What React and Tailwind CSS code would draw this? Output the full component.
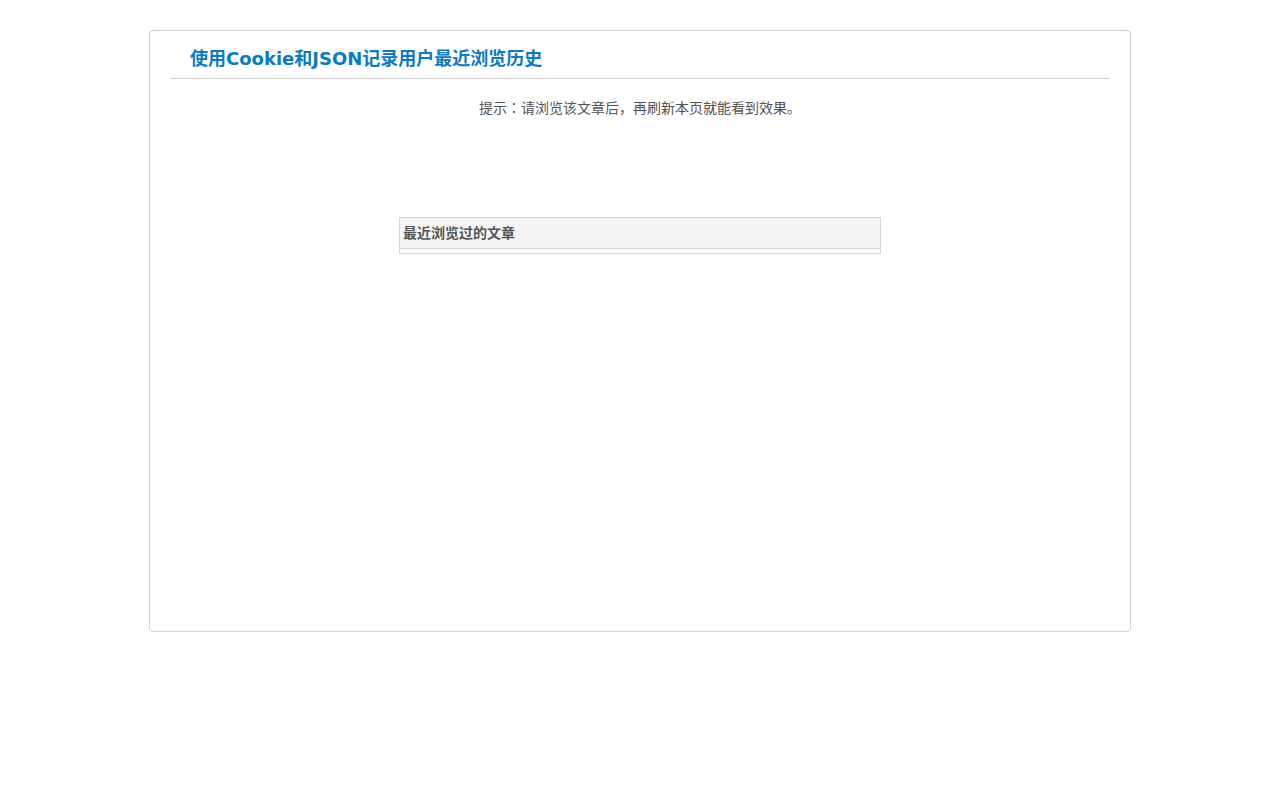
export default function App() {
  const font = { fontFamily: '"DejaVu Sans", "Noto Sans CJK JP", sans-serif' };
  return (
    <div className="bg-white min-h-[800px] pt-[30px]" style={font}>
      <div className="mx-auto w-[982px] h-[602px] border border-[#d0d0d0] rounded-[4px] px-[20px]">
        <h1 className="m-0 pl-[20px] pt-[14px] pb-[6px] text-[18px] leading-[27px] font-bold text-[#0a7bc1] border-b border-[#d0d0d0]">
          使用Cookie和JSON记录用户最近浏览历史
        </h1>
        <p className="mt-[19px] text-center text-[14px] leading-[21px] text-[#555]">
          提示：请浏览该文章后，再刷新本页就能看到效果。
        </p>
        <div className="mx-auto mt-[98px] w-[482px] border border-[#d5d5d5]">
          <div className="h-[31px] bg-[#f5f5f5] border-b border-[#d5d5d5] pl-[3px] text-[14px] leading-[30px] font-bold text-[#555]">
            最近浏览过的文章
          </div>
          <div className="h-[4px]"></div>
        </div>
      </div>
    </div>
  );
}
